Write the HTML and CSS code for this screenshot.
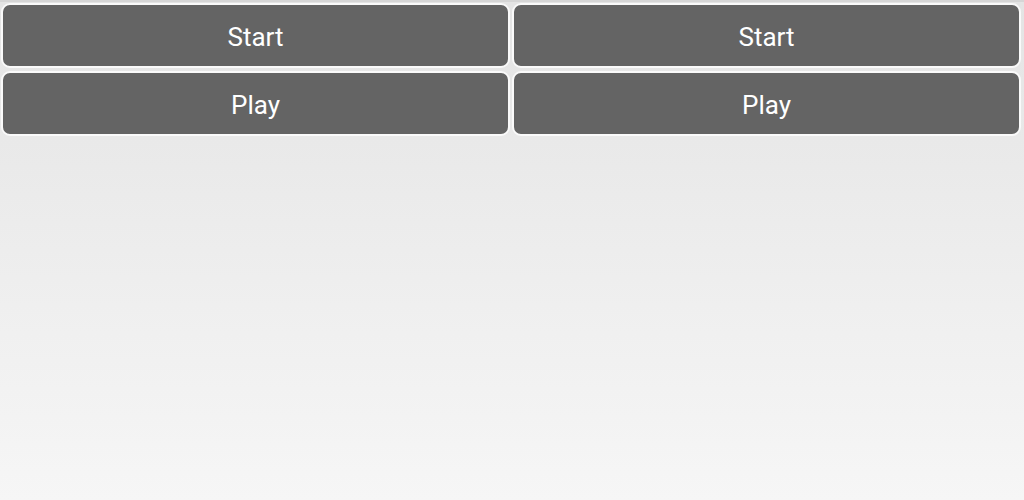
FILE: index.html
```html
<!DOCTYPE html>
<html lang="en">
<head>
    <meta charset="UTF-8">
    <meta name="viewport" content="width=device-width, initial-scale=1.0">
    <title>Buttons</title>
    <link rel="stylesheet" href="styles.css">
</head>
<body>
    <div class="grid">
        <button class="btn">Start</button>
        <button class="btn">Start</button>
        <button class="btn">Play</button>
        <button class="btn">Play</button>
    </div>
</body>
</html>
```

FILE: styles.css
```css
html, body {
    height: 100%;
}
body {
    margin: 0;
    font-family: Roboto, "Noto Sans", sans-serif;
    background: linear-gradient(to bottom, #e4e4e4 0%, #f6f6f6 100%);
    border-top: 2px solid #d6d6d6;
    box-sizing: border-box;
}
.grid {
    display: grid;
    grid-template-columns: 1fr 1fr;
    gap: 3px 2px;
    padding: 1px 3px 0 1px;
}
.btn {
    height: 65px;
    border: 2px solid #fafafa;
    border-radius: 9px;
    background-color: #646464;
    color: #fff;
    font-family: Roboto, "Noto Sans", sans-serif;
    font-size: 26px;
    padding: 2px 0 0;
}
```
